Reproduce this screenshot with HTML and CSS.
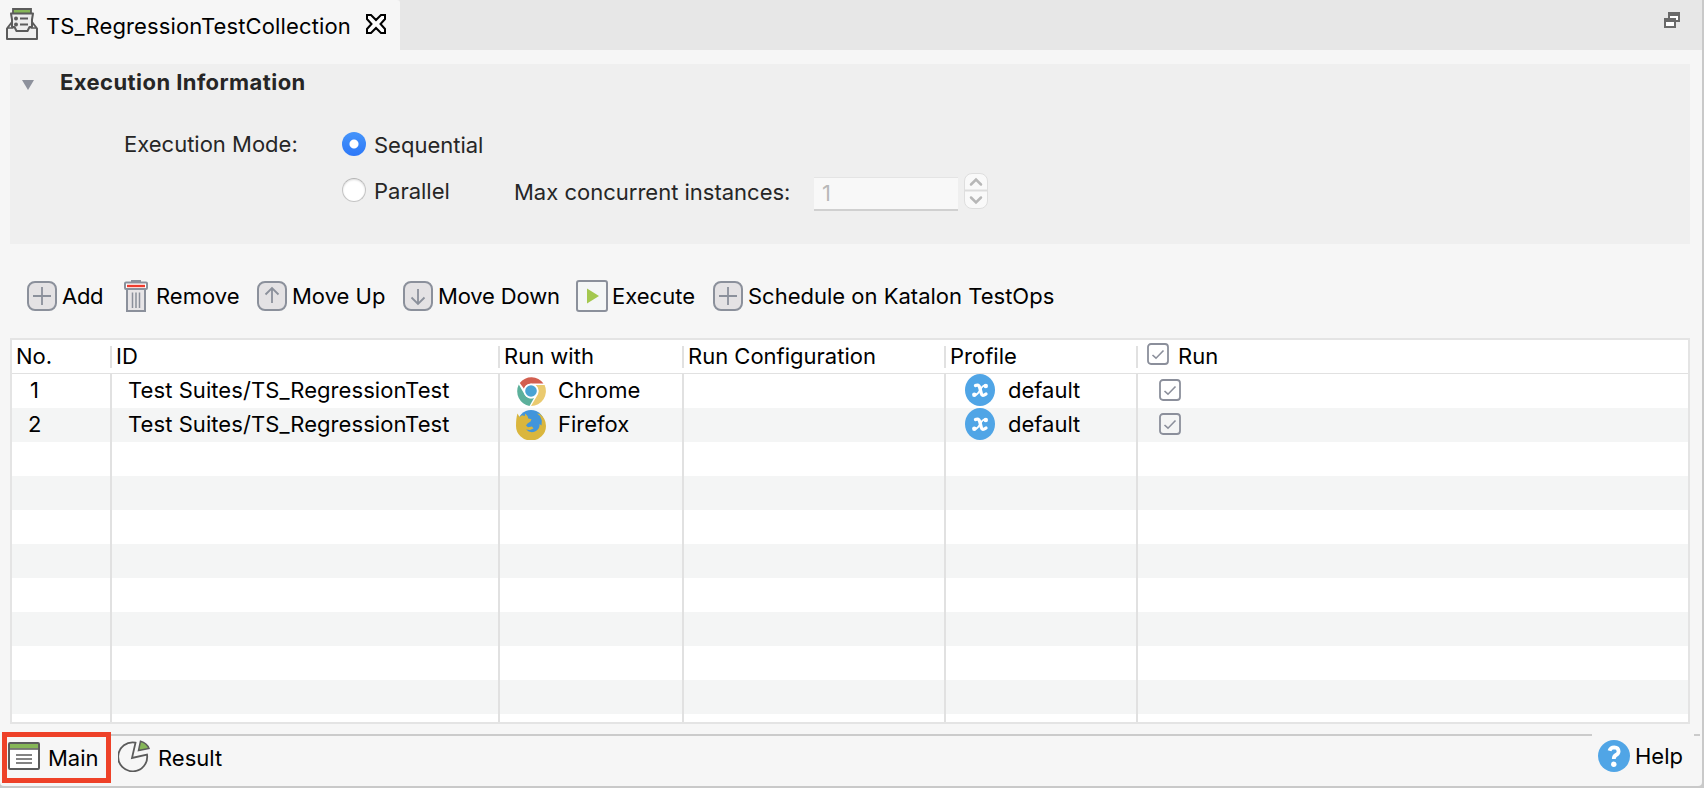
FILE: index.html
```html
<!DOCTYPE html>
<html lang="en">
<head>
<meta charset="utf-8">
<title>TS_RegressionTestCollection</title>
<link rel="stylesheet" href="styles.css">
</head>
<body>
<svg class="defs" width="0" height="0">
  <symbol id="plus" viewBox="0 0 30 30"><rect x="1" y="1" width="28" height="28" rx="7" fill="#e4e2e4" stroke="#8b909b" stroke-width="2"/><path d="M15 6v18M6 15h18" stroke="#8b909b" stroke-width="1.8"/></symbol>
  <symbol id="check" viewBox="0 0 22 22"><rect x="1" y="1" width="20" height="20" rx="3" fill="none" stroke="#8b8f9b" stroke-width="1.8"/><path d="M5.5 12l3.500 3.200 7.500-7.700" fill="none" stroke="#8b8f9b" stroke-width="1.6"/></symbol>
  <symbol id="profile" viewBox="0 0 30 32"><ellipse cx="15" cy="16" rx="15" ry="16" fill="#50a5e6"/><g fill="none" stroke="#fff" stroke-linecap="round"><path d="M10.500 11.500q3.200-1.500 4.200 2l1.600 6q.8 3.500 4.700.5" stroke-width="3.300"/><path d="M21 11.500q-3-1-5.500 4t-6.200 6" stroke-width="1.700"/></g><circle cx="20.800" cy="12" r="2.200" fill="#fff"/><circle cx="9.300" cy="20.700" r="2.200" fill="#fff"/></symbol>
</svg>
<div class="window">
  <header class="tabs">
    <div class="tab">
      <svg class="tab-icon" width="32" height="32" viewBox="0 0 32 32"><path d="M6 14L1 20.500V31H31V20.500L26 14" fill="#f0f0f0" stroke="#5b5b5b" stroke-width="2" stroke-linejoin="round"/><path d="M7 1h18v5H7z" fill="#85b657" stroke="#5b5b5b" stroke-width="1.800"/><path d="M5 5.500h22l-1 6V19h-2.500l-2 4h-11l-2-4H6v-7.500z" fill="#ececec" stroke="#5b5b5b" stroke-width="2" stroke-linejoin="round"/><path d="M1.500 20h6M24.500 20h6" stroke="#5b5b5b" stroke-width="1.600"/><path d="M14 10.500h8M14 16.500h8" stroke="#5b5b5b" stroke-width="1.800"/><circle cx="10" cy="10.500" r="2" fill="#5b5b5b"/><circle cx="10" cy="16.500" r="2" fill="#5b5b5b"/></svg>
      <span class="t tab-title">TS_RegressionTestCollection</span>
      <svg class="close" width="22" height="22" viewBox="0 0 22 22"><path d="M2 2h4l5 5 5-5h4v4l-4.500 5 4.500 5v4h-4l-5-5-5 5H2v-4l4.500-5L2 6z" fill="#fff" stroke="#000" stroke-width="2"/></svg>
    </div>
    <svg class="restore" width="16" height="16" viewBox="0 0 16 16"><path d="M4 0h12v10H4z" fill="#696969"/><path d="M6 4h8v4H6z" fill="#fff"/><path d="M0 6h12v10H0z" fill="#696969"/><path d="M2 10h8v4H2z" fill="#fff"/></svg>
  </header>

  <section class="info">
    <div class="info-head"><svg width="12" height="10" viewBox="0 0 12 10"><path d="M0 0h12L6 10z" fill="#8d919c"/></svg><h2 class="t">Execution Information</h2></div>
    <div class="mode"><span class="t mode-label">Execution Mode:</span><i class="radio on"></i><span class="t seq">Sequential</span></div>
    <div class="mode2"><i class="radio"></i><span class="t par">Parallel</span><span class="t max">Max concurrent instances:</span><span class="field">1</span>
      <svg class="stepper" width="24" height="36" viewBox="0 0 24 36"><rect x=".5" y=".5" width="23" height="35" rx="7.500" fill="#f9f9f9" stroke="#dedede"/><path d="M1 17.500h22" stroke="#dcdcdc" stroke-width="2"/><path d="M7 11.500l5-5 5 5M7 24.500l5 5 5-5" fill="none" stroke="#b7b7b7" stroke-width="2.500" stroke-linecap="round"/></svg>
    </div>
  </section>

  <nav class="toolbar">
    <div class="tool add"><svg width="30" height="30"><use href="#plus"/></svg><span class="t">Add</span></div>
    <div class="tool remove"><svg width="24" height="32" viewBox="0 0 24 32"><path d="M7 0h10v3H7z" fill="#8b909b"/><path d="M3 9h18v22H3z" fill="#e7e5e7" stroke="#8b909b" stroke-width="2"/><rect x="1" y="2.500" width="22" height="6.500" rx="1" fill="#fff" stroke="#8b909b" stroke-width="2"/><path d="M3 6h18" stroke="#ee3b2e" stroke-width="2.400"/><path d="M8.500 12.500V28M12 12.500V28M15.500 12.500V28" stroke="#8b909b" stroke-width="1.500"/></svg><span class="t">Remove</span></div>
    <div class="tool up"><svg width="30" height="30" viewBox="0 0 30 30"><rect x="1" y="1" width="28" height="28" rx="7" fill="#e4e2e4" stroke="#8b909b" stroke-width="2"/><path d="M15 22V7M8.500 13.500L15 7l6.500 6.500" fill="none" stroke="#8b909b" stroke-width="1.800"/></svg><span class="t">Move Up</span></div>
    <div class="tool down"><svg width="30" height="30" viewBox="0 0 30 30"><rect x="1" y="1" width="28" height="28" rx="7" fill="#e4e2e4" stroke="#8b909b" stroke-width="2"/><path d="M15 8v15M8.500 16.500L15 23l6.500-6.500" fill="none" stroke="#8b909b" stroke-width="1.800"/></svg><span class="t">Move Down</span></div>
    <div class="tool exec"><svg width="32" height="32" viewBox="0 0 32 32"><rect x="1" y="1" width="30" height="30" rx="2" fill="#f4f6f6" stroke="#8b909b" stroke-width="2"/><path d="M11 8.500v15L23 16z" fill="#a4c84f"/></svg><span class="t">Execute</span></div>
    <div class="tool sched"><svg width="30" height="30"><use href="#plus"/></svg><span class="t">Schedule on Katalon TestOps</span></div>
  </nav>

  <main class="grid">
    <div class="row head">
      <div class="c"><span class="t h-no">No.</span></div><div class="c"><span class="t h-id">ID</span></div><div class="c"><span class="t h-with">Run with</span></div><div class="c"><span class="t h-conf">Run Configuration</span></div><div class="c"><span class="t h-prof">Profile</span></div><div class="c"><svg class="h-check" width="22" height="22"><use href="#check"/></svg><span class="t h-run">Run</span></div>
    </div>
    <div class="row">
      <div class="c"><span class="t num">1</span></div><div class="c"><span class="t suite">Test Suites/TS_RegressionTest</span></div>
      <div class="c"><svg class="browser" width="30" height="30" viewBox="0 0 30 30"><circle cx="15" cy="15" r="15" fill="#fff"/><path d="M3.800 7A14.800 14.800 0 0 1 27.500 7.500H15A7.500 7.500 0 0 0 8 12.800z" fill="#d25f50"/><path d="M2.800 8.500A14.900 14.900 0 0 0 13.500 29.900L18 22A7.700 7.700 0 0 1 8.300 18z" fill="#5cb09b"/><path d="M28.600 9A14.800 14.800 0 0 1 15 29.900L21.500 19A7.700 7.700 0 0 0 19.500 9z" fill="#eaca6f"/><circle cx="15" cy="15" r="7.300" fill="#fff"/><circle cx="15" cy="15" r="5.800" fill="#4aa3d3"/></svg><span class="t chrome">Chrome</span></div>
      <div class="c"></div><div class="c"><svg class="prof" width="30" height="32"><use href="#profile"/></svg><span class="t def">default</span></div><div class="c"><svg class="run" width="22" height="22"><use href="#check"/></svg></div>
    </div>
    <div class="row">
      <div class="c"><span class="t num two">2</span></div><div class="c"><span class="t suite">Test Suites/TS_RegressionTest</span></div>
      <div class="c"><svg class="browser" width="30" height="30" viewBox="0 0 30 30"><circle cx="15" cy="13.500" r="13.500" fill="#4195db"/><path d="M1.500 3.500L3.500 7 6 5.200 8.800 6 9.200 3.500 11.500 6 12.300 8.500 15.500 9.300 14.500 11.500 11.500 13.500 10 15.500 12 17.200 16 16.500 17.500 18.500 14 20 10 19.500Q14 23.500 19 21.500 24 19 23.500 14L25.500 15.500 25.800 10.500 24 6 21 3.500 24 4Q30 8.500 30 16A15 14.500 0 0 1 0 16Q0 8 1.500 3.500z" fill="#dab63d"/></svg><span class="t firefox">Firefox</span></div>
      <div class="c"></div><div class="c"><svg class="prof" width="30" height="32"><use href="#profile"/></svg><span class="t def">default</span></div><div class="c"><svg class="run" width="22" height="22"><use href="#check"/></svg></div>
    </div>
    <div class="row"><div class="c"></div><div class="c"></div><div class="c"></div><div class="c"></div><div class="c"></div><div class="c"></div></div>
    <div class="row"><div class="c"></div><div class="c"></div><div class="c"></div><div class="c"></div><div class="c"></div><div class="c"></div></div>
    <div class="row"><div class="c"></div><div class="c"></div><div class="c"></div><div class="c"></div><div class="c"></div><div class="c"></div></div>
    <div class="row"><div class="c"></div><div class="c"></div><div class="c"></div><div class="c"></div><div class="c"></div><div class="c"></div></div>
    <div class="row"><div class="c"></div><div class="c"></div><div class="c"></div><div class="c"></div><div class="c"></div><div class="c"></div></div>
    <div class="row"><div class="c"></div><div class="c"></div><div class="c"></div><div class="c"></div><div class="c"></div><div class="c"></div></div>
    <div class="row"><div class="c"></div><div class="c"></div><div class="c"></div><div class="c"></div><div class="c"></div><div class="c"></div></div>
    <div class="row"><div class="c"></div><div class="c"></div><div class="c"></div><div class="c"></div><div class="c"></div><div class="c"></div></div>
    <div class="row last"><div class="c"></div><div class="c"></div><div class="c"></div><div class="c"></div><div class="c"></div><div class="c"></div></div>
  </main>

  <footer class="footer">
    <div class="main-tab"><svg width="32" height="28" viewBox="0 0 32 28"><rect x="1" y="1" width="30" height="26" rx="1" fill="#fff" stroke="#5b5b5b" stroke-width="2"/><path d="M2 2h28v4.500H2z" fill="#85b657"/><path d="M2 7h28M8 13h16M8 17h16M8 21h16" stroke="#5b5b5b" stroke-width="1.600"/></svg><span class="t">Main</span></div>
    <div class="result-tab"><svg width="32" height="32" viewBox="0 0 32 32"><path d="M17.500 2.600A14.500 14.500 0 1 0 29 14.500L14 18z" fill="#f6f6f6" stroke="#5b5b5b" stroke-width="1.800"/><path d="M22.500 1.200Q29 3 31 8.500L20.500 10.500z" fill="#85b657" stroke="#5b5b5b" stroke-width="1.500"/></svg><span class="t">Result</span></div>
    <div class="help"><svg width="32" height="32" viewBox="0 0 32 32"><circle cx="16" cy="16" r="16" fill="#50a5e6"/><path d="M11.500 10.800Q12.500 7.300 16.200 7.300 20.500 7.500 20.600 11.300 20.500 13.600 18 15 15.800 16.300 15.800 19" fill="none" stroke="#fff" stroke-width="3.800"/><circle cx="15.800" cy="24.200" r="2.700" fill="#fff"/></svg><span class="t">Help</span></div>
  </footer>
</div>
</body>
</html>
```
FILE: styles.css
```css
* { box-sizing: border-box; margin: 0; padding: 0; }
body { background: #c9c9c9; font: 22px/32px Inter, "Liberation Sans", sans-serif; color: #000; overflow: hidden; }
svg { display: block; flex: none; }
.defs { position: absolute; }
.t { white-space: nowrap; flex: none; height: 32px; line-height: 32px; }

.window { width: 1702px; height: 786px; background: #f6f6f6; display: flex; flex-direction: column; border-radius: 0 4px 4px 4px; }

.tabs { height: 50px; background: #e7e7e7; display: flex; justify-content: space-between; flex: none; }
.tab { width: 400px; background: #f6f6f6; display: flex; align-items: flex-start; padding-left: 6px; border-top-right-radius: 3px; }
.tab-icon { margin-top: 8px; }
.tab-title { margin: 10px 0 0 8px; width: 319px; letter-spacing: 0.13px; }
.close { margin-top: 13px; }
.restore { margin: 12px 22px 0 0; }

.info { margin: 14px 12px 0 10px; height: 180px; background: #efefef; color: #262626; flex: none; }
.info-head { display: flex; padding: 2px 0 0 12px; height: 60px; }
.info-head svg { margin-top: 14px; }
.info-head h2 { font-size: 22px; font-weight: 700; margin-left: 26px; letter-spacing: 0.43px; }
.mode { display: flex; padding-left: 114px; height: 46px; }
.mode-label { width: 218px; margin-top: 4px; }
.radio { width: 24px; height: 24px; border-radius: 50%; flex: none; margin-top: 8px; background: #fff; border: 1px solid #c4c4c4; border-top-color: #b4b4b4; box-shadow: inset 0 1px 2px #ddd; }
.radio.on { border: 0; box-shadow: none; background: radial-gradient(circle, #fff 0 4px, transparent 5px), linear-gradient(#4594fa, #2d78f8); }
.seq { margin: 5px 0 0 8px; }
.mode2 { display: flex; padding-left: 332px; }
.par { width: 140px; margin: 5px 0 0 8px; }
.max { width: 300px; margin-top: 6px; }
.field { width: 144px; height: 34px; margin-top: 7px; background: #f8f8f8; border-top: 1px solid #e4e4e4; border-bottom: 2px solid #d0d0d0; color: #b8b8b8; padding-left: 8px; line-height: 30px; }
.stepper { margin: 3px 0 0 6px; }

.toolbar { height: 94px; display: flex; padding: 36px 0 0 27px; flex: none; }
.tool { display: flex; align-items: flex-start; }
.tool svg { margin-top: 1px; }
.tool .t { margin-left: 5px; }
.add { width: 97px; letter-spacing: -0.3px; }
.remove { width: 133px; }
.up { width: 146px; }
.down { width: 173px; letter-spacing: -0.15px; }
.exec { width: 137px; }
.remove svg, .exec svg { margin-top: 0; }
.remove .t { margin-left: 8px; }
.exec .t { margin-left: 4px; }

.grid { margin: 0 12px 0 10px; height: 386px; border: 2px solid #e4e4e4; background: #fff; flex: none; }
.row { display: grid; grid-template-columns: 100px 388px 184px 262px 192px 1fr; height: 34px; }
.row:nth-child(odd) { background: #f4f5f5; }
.row.head, .row.last { background: #fff; }
.row.last { height: 8px; }
.c { display: flex; border-right: 2px solid #e1e1e1; }
.c:last-child { border-right: 0; }
.head { border-bottom: 1px solid #e1e1e1; }
.head .c { height: 22px; margin-top: 6px; }
.head .t { margin: -6px 0 0 4px; }
.h-check { margin: -3px 0 0 9px; }
.head .h-run { margin-left: 9px; }
.num { margin-left: 18px; }
.num.two { margin-left: 16px; }
.suite { margin-left: 16px; letter-spacing: 0.07px; }
.browser { margin: 2px 12px 0 16px; }
.prof { margin: 0 13px 0 19px; }
.run { margin: 5px 0 0 21px; }

.footer { flex: 1; display: flex; margin-top: 7px; padding-left: 2px; }
.main-tab { width: 109px; height: 51px; margin-top: 1px; border: 5px solid #ee4128; display: flex; padding: 5px 0 0 1px; }
.main-tab .t { margin: 0 0 0 8px; }
.result-tab { display: flex; width: 1481px; margin-top: 3px; border-top: 2px solid #cbcbcb; padding: 4px 0 0 7px; }
.result-tab .t { margin: 2px 0 0 8px; }
.help { display: flex; padding: 9px 0 0 6px; width: 102px; }
.help .t { margin-left: 5px; }
.footer::after { content: ""; width: 6px; height: 2px; margin-top: 3px; background: #cbcbcb; }
```
